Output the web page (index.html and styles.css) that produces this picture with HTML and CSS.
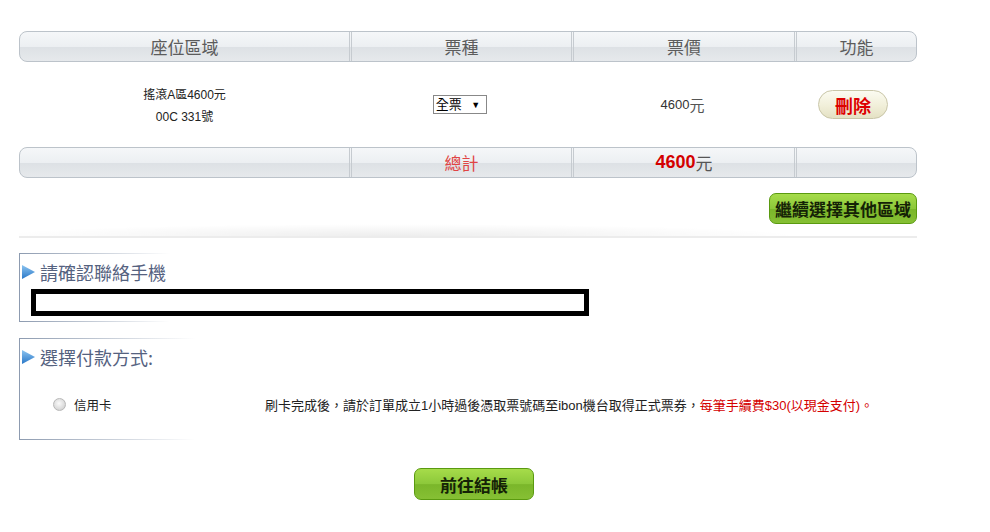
FILE: index.html
```html
<!DOCTYPE html>
<html lang="zh-Hant">
<head>
    <meta charset="UTF-8">
    <meta name="viewport" content="width=device-width, initial-scale=1.0">
    <title>確認訂單</title>
    <link rel="stylesheet" href="styles.css">
</head>
<body>
    <div class="order">
        <div class="bar bar-head">
            <div class="cell">座位區域</div>
            <div class="cell">票種</div>
            <div class="cell">票價</div>
            <div class="cell">功能</div>
        </div>

        <div class="ticket-row">
            <div class="cell seat">
                <div>搖滾A區4600元</div>
                <div>00C 331號</div>
            </div>
            <div class="cell">
                <span class="fake-select">全票 <span class="arrow">▼</span></span>
            </div>
            <div class="cell price">4600<span class="yuan">元</span></div>
            <div class="cell">
                <button class="btn-delete">刪除</button>
            </div>
        </div>

        <div class="bar bar-total">
            <div class="cell"></div>
            <div class="cell total-label">總計</div>
            <div class="cell total-sum"><b>4600</b><span class="yuan">元</span></div>
            <div class="cell"></div>
        </div>

        <div class="more">
            <button class="btn-green btn-more">繼續選擇其他區域</button>
        </div>

        <div class="divider"></div>

        <div class="section phone">
            <h2 class="section-title">
                <svg class="tri" width="13" height="14" viewBox="0 0 13 14">
                    <defs>
                        <linearGradient id="triGrad" x1="0" y1="0" x2="0" y2="1">
                            <stop offset="0" stop-color="#8cc4f0"/>
                            <stop offset="1" stop-color="#2a78c8"/>
                        </linearGradient>
                    </defs>
                    <polygon points="0,0 13,7 0,14" fill="url(#triGrad)"/>
                </svg>請確認聯絡手機
            </h2>
            <div class="phone-box"></div>
        </div>

        <div class="section pay">
            <h2 class="section-title">
                <svg class="tri" width="13" height="14" viewBox="0 0 13 14">
                    <polygon points="0,0 13,7 0,14" fill="url(#triGrad)"/>
                </svg>選擇付款方式:
            </h2>
            <div class="pay-row">
                <label class="pay-option"><span class="radio"></span>信用卡</label>
                <div class="pay-note">刷卡完成後，請於訂單成立1小時過後憑取票號碼至ibon機台取得正式票券，<span class="red">每筆手續費$30(以現金支付)。</span></div>
            </div>
        </div>

        <div class="checkout">
            <button class="btn-green btn-checkout">前往結帳</button>
        </div>
    </div>
</body>
</html>
```

FILE: styles.css
```css
body {
    margin: 0;
    padding: 31px 0 0 19px;
    background-color: #fff;
    font-family: "Liberation Sans", "Noto Sans CJK TC", sans-serif;
    color: #333;
}
.order {
    width: 898px;
}
.bar {
    display: grid;
    grid-template-columns: 329px 222px 223px 122px;
    height: 29px;
    border: 1px solid #bcc3ca;
    border-radius: 8px;
    background: linear-gradient(to bottom, #f5f7f9 0%, #eceff2 50%, #dde1e5 52%, #e6e9ec 100%);
    overflow: hidden;
}
.bar .cell {
    display: flex;
    align-items: center;
    justify-content: center;
    border-left: 3px double #c6cbd0;
}
.bar .cell:first-child {
    border-left: none;
}
.bar-head .cell {
    font-family: "Noto Sans CJK TC", sans-serif;
    font-size: 17px;
    color: #5c5c5c;
}
.ticket-row {
    display: grid;
    grid-template-columns: 331px 222px 223px 122px;
    height: 85px;
}
.ticket-row .cell {
    display: flex;
    align-items: center;
    justify-content: center;
}
.seat {
    flex-direction: column;
    font-size: 12px;
    line-height: 22px;
    color: #222;
    padding-top: 2px;
}
.fake-select {
    display: inline-block;
    border: 1px solid #888;
    padding: 0 6px 0 2px;
    height: 17px;
    line-height: 17px;
    font-size: 13px;
    color: #000;
    background: #fff;
    margin-right: 2px;
}
.fake-select .arrow {
    font-size: 9px;
    margin-left: 6px;
    vertical-align: 1px;
}
.price {
    font-size: 13px;
    color: #333;
    padding-right: 2px;
}
.yuan {
    font-size: 15px;
    color: #555;
}
.btn-delete {
    width: 70px;
    height: 29px;
    border: 1px solid #c9c6a8;
    border-radius: 15px;
    background: linear-gradient(to bottom, #fbfbf1 0%, #f1efd9 55%, #e4e1c4 100%);
    color: #dd0000;
    font-family: "Noto Sans CJK TC", sans-serif;
    font-weight: bold;
    font-size: 18px;
    line-height: 1;
    padding: 0;
    margin-right: 6px;
    cursor: pointer;
}
.total-label {
    font-family: "Noto Sans CJK TC", sans-serif;
    color: #e04444;
    font-size: 17px;
}
.total-sum b {
    color: #d40000;
    font-size: 18px;
}
.total-sum .yuan {
    font-family: "Noto Sans CJK TC", sans-serif;
    font-size: 17px;
}
.more {
    display: flex;
    justify-content: flex-end;
    margin-top: 15px;
}
.btn-green {
    border: 1px solid #5a9a10;
    border-radius: 7px;
    background: linear-gradient(to bottom, #a6dc4a 0%, #8cc83a 50%, #7ab62a 52%, #86c034 100%);
    color: #142206;
    font-family: "Noto Sans CJK TC", sans-serif;
    font-weight: bold;
    font-size: 17px;
    line-height: 1;
    padding: 0;
    cursor: pointer;
}
.btn-more {
    width: 148px;
    height: 31px;
}
.divider {
    height: 12px;
    border-bottom: 2px solid #ececec;
    background: radial-gradient(ellipse 45% 100% at 42% 100%, rgba(0,0,0,0.07), rgba(0,0,0,0) 100%);
}
.section {
    border-left: 1px solid #8d9bb0;
    background-image:
        linear-gradient(to right, #8d9bb0, rgba(141,155,176,0) 150px),
        linear-gradient(to right, #8d9bb0, rgba(141,155,176,0) 150px);
    background-size: 100% 1px, 100% 1px;
    background-position: top left, bottom left;
    background-repeat: no-repeat;
}
.phone {
    margin-top: 15px;
    height: 69px;
}
.pay {
    margin-top: 16px;
    height: 102px;
    background-image:
        linear-gradient(to right, #8d9bb0, rgba(141,155,176,0) 175px),
        linear-gradient(to right, #8d9bb0, rgba(141,155,176,0) 175px);
}
.section-title {
    display: flex;
    align-items: center;
    margin: 0;
    padding: 9px 0 0 2px;
    font-size: 18px;
    font-weight: normal;
    color: #55627f;
    font-family: "Noto Sans CJK TC", sans-serif;
    line-height: 20px;
}
.tri {
    margin-right: 5px;
}
.phone-box {
    width: 548px;
    height: 17px;
    margin: 7px 0 0 11px;
    border: 5px solid #000;
    background: #fff;
}
.pay-row {
    display: flex;
    align-items: center;
    margin-top: 28px;
    font-size: 13px;
    color: #222;
}
.pay-option {
    display: flex;
    align-items: center;
    width: 212px;
    padding-left: 33px;
    font-size: 12.5px;
}
.radio {
    display: inline-block;
    width: 11px;
    height: 11px;
    margin-right: 8px;
    border-radius: 50%;
    border: 1px solid #b8b8b8;
    background: radial-gradient(circle at 45% 40%, #fafafa 0%, #dcdcdc 60%, #c4c4c4 100%);
}
.pay-note .red {
    color: #d40000;
}
.checkout {
    display: flex;
    margin-top: 28px;
    padding-left: 395px;
}
.btn-checkout {
    width: 120px;
    height: 32px;
}
```
